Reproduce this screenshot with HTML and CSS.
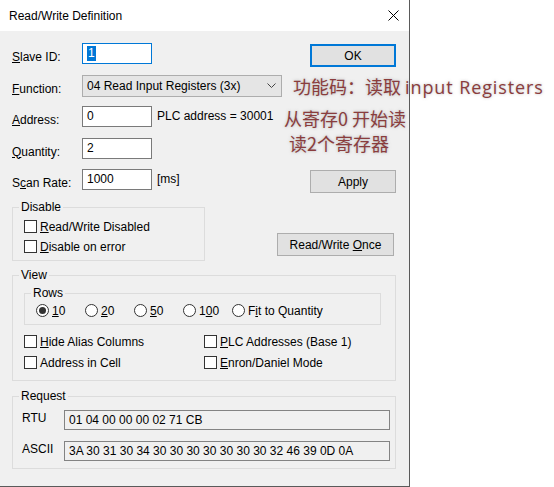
FILE: index.html
```html
<!DOCTYPE html>
<html>
<head>
<meta charset="utf-8">
<link rel="stylesheet" href="styles.css">
</head>
<body>
<div class="dialog">
  <div class="titlebar">
    <span class="title">Read/Write Definition</span>
    <svg class="close" width="11" height="11" viewBox="0 0 11 11"><path d="M0.5 0.5 L10.5 10.5 M10.5 0.5 L0.5 10.5" stroke="#000" stroke-width="1" fill="none"/></svg>
  </div>
  <div class="body">
    <div class="top">
      <div class="form">
        <span class="lbl"><u>S</u>lave ID:</span>
        <div class="field focus"><span class="sel">1</span></div>
        <span></span>
        <span class="lbl"><u>F</u>unction:</span>
        <div class="combo"><span>04 Read Input Registers (3x)</span><svg width="9" height="5" viewBox="0 0 9 5"><path d="M0.5 0.5 L4.5 4.5 L8.5 0.5" stroke="#444" fill="none"/></svg></div>
        <span class="lbl"><u>A</u>ddress:</span>
        <div class="field">0</div>
        <span class="note">PLC address = 30001</span>
        <span class="lbl"><u>Q</u>uantity:</span>
        <div class="field">2</div>
        <span></span>
        <span class="lbl">S<u>c</u>an Rate:</span>
        <div class="field">1000</div>
        <span class="note">[ms]</span>
      </div>
      <div class="buttons">
        <div class="btn default"><span>OK</span></div>
        <div class="btn apply"><span>Apply</span></div>
      </div>
    </div>

    <div class="disable-row">
      <fieldset class="group disable">
        <legend>Disable</legend>
        <div class="inner">
          <div class="check"><span class="box"></span><span><u>R</u>ead/Write Disabled</span></div>
          <div class="check"><span class="box"></span><span><u>D</u>isable on error</span></div>
        </div>
      </fieldset>
      <div class="btn once"><span>Read/Write <u>O</u>nce</span></div>
    </div>

    <fieldset class="group view">
      <legend>View</legend>
      <div class="inner">
        <fieldset class="group rows">
          <legend>Rows</legend>
          <div class="radios">
            <div class="radio"><span class="circle on"></span><span><u>1</u>0</span></div>
            <div class="radio"><span class="circle"></span><span><u>2</u>0</span></div>
            <div class="radio"><span class="circle"></span><span><u>5</u>0</span></div>
            <div class="radio"><span class="circle"></span><span>1<u>0</u>0</span></div>
            <div class="radio"><span class="circle"></span><span>F<u>i</u>t to Quantity</span></div>
          </div>
        </fieldset>
        <div class="checks">
          <div class="check"><span class="box"></span><span><u>H</u>ide Alias Columns</span></div>
          <div class="check"><span class="box"></span><span><u>P</u>LC Addresses (Base 1)</span></div>
          <div class="check"><span class="box"></span><span>Address in Cell</span></div>
          <div class="check"><span class="box"></span><span><u>E</u>nron/Daniel Mode</span></div>
        </div>
      </div>
    </fieldset>

    <fieldset class="group request">
      <legend>Request</legend>
      <div class="req">
        <span class="rlbl">RTU</span>
        <div class="rfield">01 04 00 00 00 02 71 CB</div>
        <span class="rlbl">ASCII</span>
        <div class="rfield">3A 30 31 30 34 30 30 30 30 30 30 30 32 46 39 0D 0A</div>
      </div>
    </fieldset>
  </div>
</div>

<div class="notes">
  <div class="n1">功能码：读取 <span class="lat">input Registers</span></div>
  <div class="n2">从寄存0 开始读</div>
  <div class="n3">读2个寄存器</div>
</div>
</body>
</html>
```

FILE: styles.css
```css
html, body {
  margin: 0;
  padding: 0;
  background: #ffffff;
}
body {
  width: 554px;
  height: 487px;
  position: relative;
  overflow: hidden;
  font-family: "Liberation Sans", Arial, sans-serif;
  font-size: 12px;
  color: #000;
}
u { text-decoration: underline; text-underline-offset: 1px; }

.dialog {
  width: 410px;
  height: 487px;
  box-sizing: border-box;
  border-right: 1px solid #5a5a5a;
  border-bottom: 1px solid #5a5a5a;
  display: flex;
  flex-direction: column;
}
.titlebar {
  height: 31px;
  flex: none;
  background: #fff;
  display: flex;
  align-items: center;
  padding: 0 10px 0 9px;
}
.title {
  font-size: 12px;
  line-height: 14px;
  padding-top: 1px;
}
.close { margin-left: auto; }

.body {
  flex: 1;
  background: #f0f0f0;
  display: flex;
  flex-direction: column;
}

.top {
  display: flex;
  align-items: flex-start;
}
.form {
  padding: 12px 0 0 12px;
  display: grid;
  grid-template-columns: 70px 70px auto;
  grid-template-rows: repeat(5, 21px);
  row-gap: 10.5px;
  align-items: start;
}
.lbl {
  line-height: 14px;
  padding-top: 7px;
  white-space: nowrap;
}
.field {
  width: 70px;
  height: 21px;
  box-sizing: border-box;
  border: 1px solid #7a7a7a;
  background: #fff;
  padding: 2px 0 0 4px;
  line-height: 14px;
}
.field.focus { border-color: #0078d7; }
.sel {
  display: inline-block;
  background: #0078d7;
  color: #fff;
  padding: 0 1px;
  line-height: 15px;
}
.note {
  padding: 3px 0 0 5px;
  line-height: 14px;
  white-space: nowrap;
}
.combo {
  grid-column: 2 / 4;
  width: 200px;
  height: 22px;
  box-sizing: border-box;
  border: 1px solid #adadad;
  background: #e5e5e5;
  display: flex;
  align-items: center;
  padding: 0 3px 0 4px;
  line-height: 14px;
}
.combo svg { margin-left: auto; margin-right: 2px; }

.buttons {
  margin-left: auto;
  margin-right: 13px;
  padding-top: 13px;
  display: flex;
  flex-direction: column;
}
.btn {
  height: 23px;
  box-sizing: border-box;
  border: 1px solid #adadad;
  background: #e1e1e1;
  display: flex;
  align-items: center;
  justify-content: center;
  line-height: 14px;
  white-space: nowrap;
}
.btn.default {
  width: 86px;
  border: 2px solid #0078d7;
}
.btn.apply {
  width: 86px;
  margin-top: 103px;
}

.disable-row {
  display: flex;
  align-items: flex-start;
  margin-top: 7px;
  padding: 0 15px 0 12px;
}
.btn.once {
  width: 117px;
  margin-left: auto;
  margin-top: 33px;
}

fieldset.group {
  margin: 0;
  padding: 0;
  border: 1px solid #dcdcdc;
  box-sizing: border-box;
  min-width: 0;
}
fieldset.group legend {
  padding: 0 2px;
  margin-left: 6px;
  line-height: 14px;
  font-size: 12px;
}
fieldset.disable {
  width: 193px;
  padding: 6px 0 7px 0;
}
.disable .inner { padding-left: 11px; }
.check {
  display: flex;
  align-items: center;
  height: 13px;
  line-height: 14px;
  white-space: nowrap;
}
.disable .check + .check { margin-top: 7px; }
.box {
  width: 13px;
  height: 13px;
  box-sizing: border-box;
  border: 1px solid #333;
  background: #fff;
  margin-right: 3px;
  flex: none;
}

fieldset.view {
  margin: 7px 13px 0 12px;
  width: 384px;
  padding: 4px 0 11px 0;
}
.view .inner { padding-left: 11px; }
fieldset.rows {
  margin: 0;
  width: 357px;
  padding: 4px 0 7px 0;
}
.radios { display: flex; padding-left: 11px; }
.radio {
  width: 49px;
  display: flex;
  align-items: center;
  height: 13px;
  line-height: 14px;
  white-space: nowrap;
}
.circle {
  width: 13px;
  height: 13px;
  box-sizing: border-box;
  border: 1px solid #333;
  border-radius: 50%;
  background: #fff;
  margin-right: 3px;
  flex: none;
  display: flex;
  align-items: center;
  justify-content: center;
}
.circle.on::after {
  content: "";
  width: 7px;
  height: 7px;
  border-radius: 50%;
  background: #333;
}
.checks {
  margin-top: 10px;
  display: grid;
  grid-template-columns: 180px auto;
  row-gap: 8px;
}

fieldset.request {
  margin: 8px 13px 0 12px;
  width: 384px;
  padding: 7px 0 7px 0;
}
.req {
  display: grid;
  grid-template-columns: 42px 326px;
  row-gap: 11px;
  align-items: start;
  padding-left: 9px;
}
.rlbl {
  line-height: 14px;
  padding-top: 1px;
}
.rfield {
  height: 20px;
  box-sizing: border-box;
  border: 1px solid #838383;
  background: #f0f0f0;
  padding: 2px 0 0 4px;
  line-height: 14px;
  white-space: nowrap;
}

.notes {
  position: absolute;
  left: 0;
  top: 0;
  font-family: "Noto Sans CJK SC", "Noto Sans", sans-serif;
  font-size: 18px;
  line-height: 24px;
  color: #8a3d3d;
  text-shadow: 0 0 3px rgba(120, 120, 120, 0.5);
  white-space: nowrap;
}
.notes .lat {
  font-family: "Open Sans", "Noto Sans", sans-serif;
  letter-spacing: 0.9px;
}
.n1 { position: absolute; left: 293px; top: 74px; }
.n2 { position: absolute; left: 284px; top: 106px; }
.n3 { position: absolute; left: 289px; top: 131px; }
```
